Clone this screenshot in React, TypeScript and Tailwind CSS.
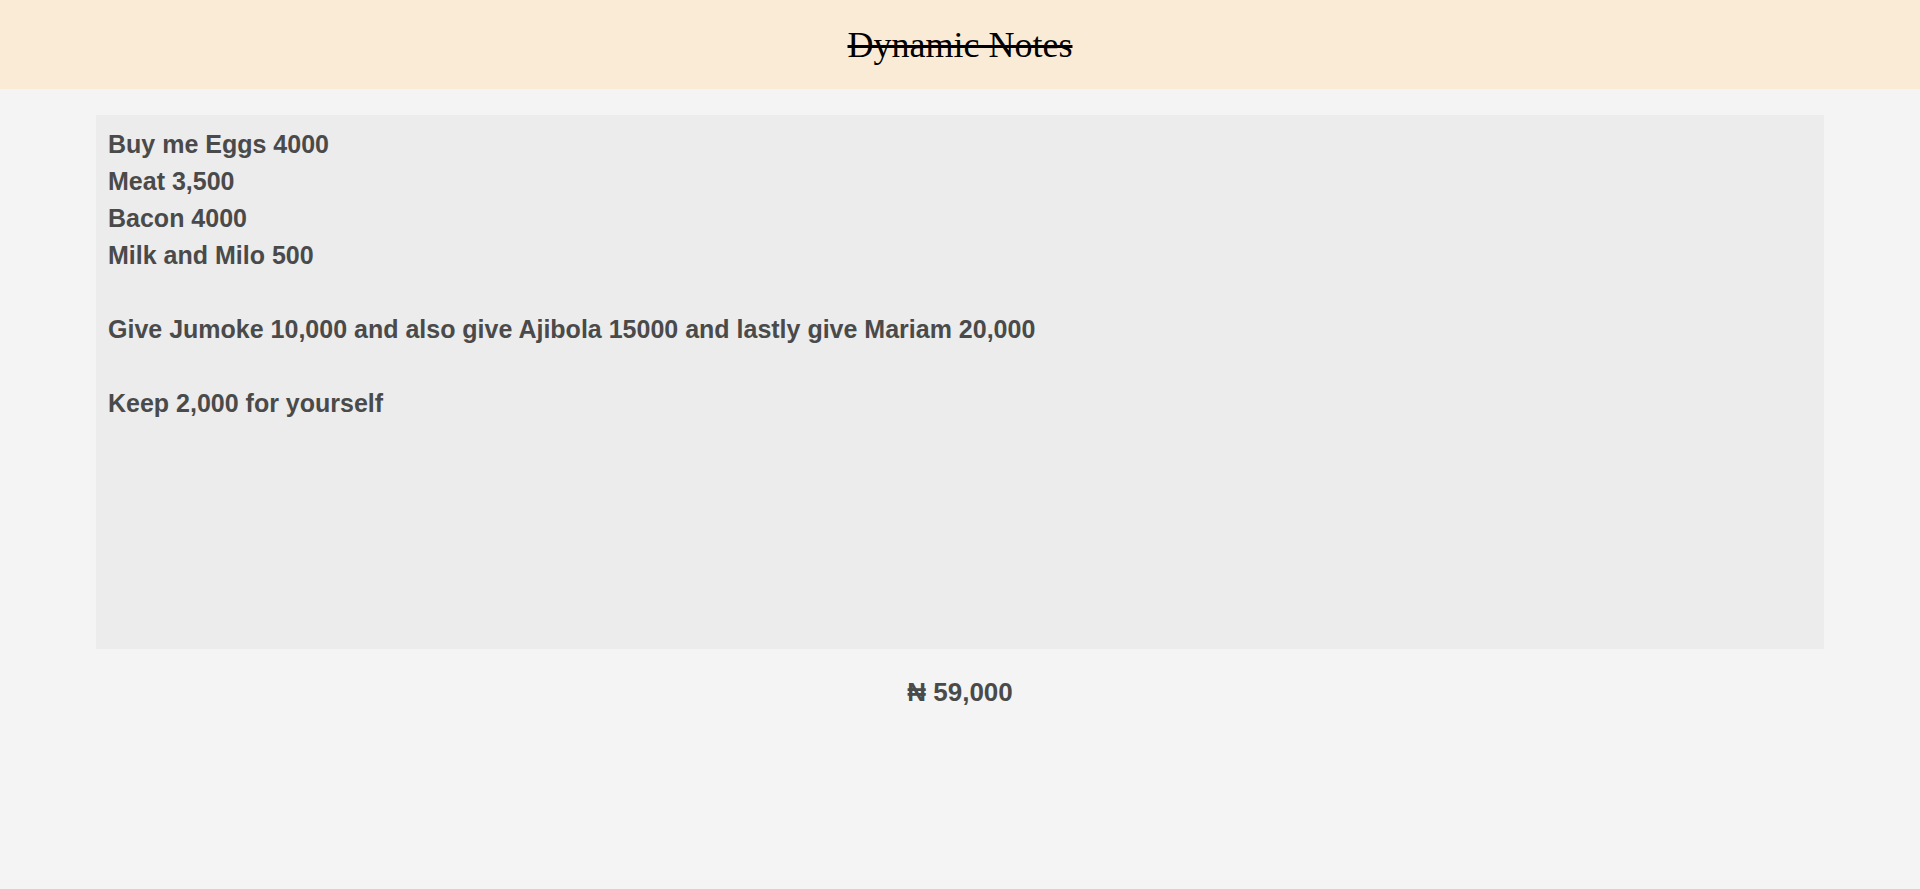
const note = `Buy me Eggs 4000
Meat 3,500
Bacon 4000
Milk and Milo 500

Give Jumoke 10,000 and also give Ajibola 15000 and lastly give Mariam 20,000

Keep 2,000 for yourself`;

export default function App() {
  return (
    <div className="min-h-screen bg-[#f4f4f4]">
      <header className="h-[89px] bg-[#faebd7] flex items-center justify-center">
        <h1 className="text-[36px] text-black line-through decoration-[3px] font-['Liberation_Serif',serif] font-normal">
          Dynamic Notes
        </h1>
      </header>
      <main className="flex flex-col items-center pt-[26px]">
        <textarea
          readOnly
          defaultValue={note}
          className="w-[90%] h-[534px] resize-none bg-[#ececec] px-3 pt-[11px] pb-2 text-[25px] leading-[37px] font-bold text-[#4a4a4a] font-['Liberation_Sans',sans-serif] outline-none"
        />
        <p className="mt-[24px] text-[26px] font-bold text-[#4a4a4a] font-['Liberation_Sans',sans-serif]">
          ₦ 59,000
        </p>
      </main>
    </div>
  );
}
